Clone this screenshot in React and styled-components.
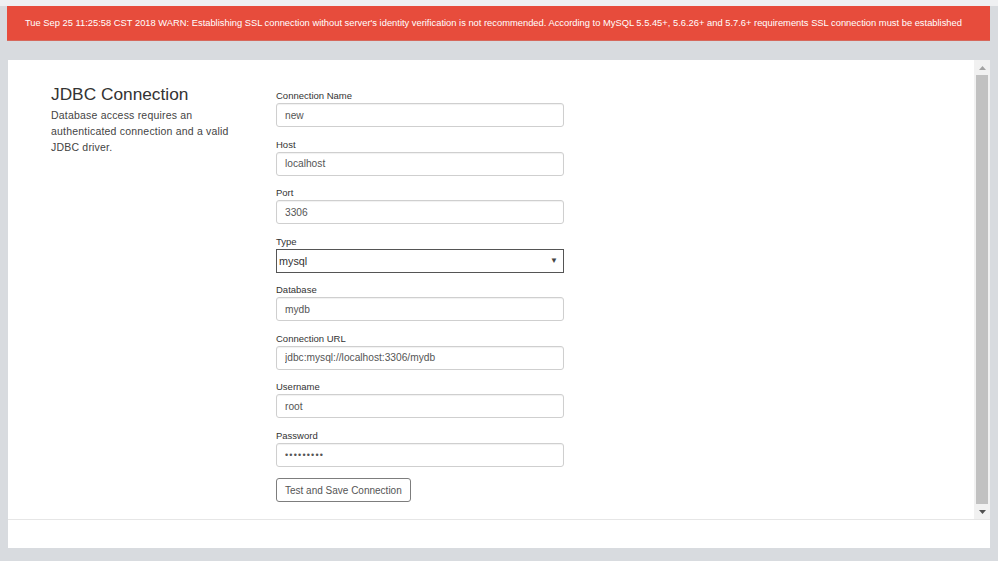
import React from 'react';
import styled, {createGlobalStyle} from 'styled-components';

const GlobalStyle = createGlobalStyle`
  html, body {
    margin: 0;
    padding: 0;
    background: #d8dbdf;
    font-family: "Liberation Sans", Arial, sans-serif;
  }
`;

const Page = styled.div`
  width: 998px;
  height: 561px;
  overflow: hidden;
  display: flex;
  flex-direction: column;
`;

const TopStrip = styled.div`
  height: 6px;
  background: #eff0f2;
`;

const Banner = styled.div`
  margin: 0 8px 0 7px;
  height: 34px;
  line-height: 34px;
  background: #e74c3c;
  color: #fff;
  font-size: 9.35px;
  padding-left: 18px;
  white-space: nowrap;
  overflow: hidden;
  border-bottom: 1px solid #d6685c;
`;

const Panel = styled.div`
  margin: 19px 8px 0 8px;
  height: 488px;
  background: #fff;
  display: flex;
  flex-direction: column;
`;

const ScrollArea = styled.div`
  flex: 0 0 459px;
  display: flex;
  border-bottom: 1px solid #e6e6e6;
`;

const Content = styled.div`
  flex: 1;
  display: flex;
  padding-left: 43px;
`;

const Intro = styled.div`
  width: 225px;
  padding-top: 24px;
`;

const Heading = styled.h1`
  margin: 0 0 3px;
  font-size: 17.3px;
  line-height: 20px;
  font-weight: normal;
  color: #333;
`;

const Description = styled.p`
  margin: 0;
  width: 180px;
  font-size: 10.5px;
  line-height: 16px;
  letter-spacing: 0.2px;
  color: #444;
`;

const Form = styled.form`
  width: 288px;
  padding-top: 30px;
  display: flex;
  flex-direction: column;
`;

const Field = styled.div`
  display: flex;
  flex-direction: column;
  margin-bottom: 11.5px;
`;

const Label = styled.label`
  font-size: 9.5px;
  line-height: 12px;
  margin-bottom: 1px;
  color: #333;
`;

const Input = styled.input`
  box-sizing: border-box;
  height: 24px;
  width: 100%;
  margin: 0;
  padding: 0 8px;
  border: 1px solid #cfcfcf;
  border-radius: 3px;
  box-shadow: inset 0 1px 1px rgba(0, 0, 0, 0.06);
  font-family: "Liberation Sans", Arial, sans-serif;
  font-size: ${props => (props.type === 'password' ? '9px' : '10.2px')};
  letter-spacing: ${props => (props.type === 'password' ? '1.2px' : '0')};
  color: #555;
  outline: none;
`;

const SelectWrap = styled.div`
  position: relative;
  &::after {
    content: '▼';
    position: absolute;
    right: 6px;
    top: 7px;
    font-size: 8px;
    color: #444;
    pointer-events: none;
  }
`;

const Select = styled.select`
  box-sizing: border-box;
  appearance: none;
  height: 24px;
  width: 100%;
  margin: 0;
  padding: 0 2px;
  border: 1px solid #555;
  border-radius: 0;
  background: #fff;
  font-family: "Liberation Sans", Arial, sans-serif;
  font-size: 10.8px;
  color: #333;
  outline: none;
`;

const Button = styled.button`
  align-self: flex-start;
  box-sizing: border-box;
  height: 24px;
  margin-top: 0;
  padding: 0 8px;
  border: 1px solid #7d7d7d;
  border-radius: 3px;
  background: #fff;
  font-family: "Liberation Sans", Arial, sans-serif;
  font-size: 10px;
  color: #555;
`;

const Scrollbar = styled.div`
  width: 16px;
  background: #f1f1f1;
  display: flex;
  flex-direction: column;
  align-items: center;
`;

const ScrollButton = styled.div`
  height: 15px;
  width: 16px;
  display: flex;
  align-items: center;
  justify-content: center;
`;

const Thumb = styled.div`
  flex: 1;
  width: 12px;
  background: #c1c1c1;
`;

const Footer = styled.div`
  flex: 1;
`;

const Arrow = ({down}) => (
  <svg width="7" height="4" viewBox="0 0 7 4">
    <polygon points={down ? '0,0 7,0 3.5,4' : '0,4 7,4 3.5,0'} fill={down ? '#505050' : '#a3a3a3'}/>
  </svg>
);

const fields = [
  {label: 'Connection Name', value: 'new'},
  {label: 'Host', value: 'localhost'},
  {label: 'Port', value: '3306'},
  {label: 'Type', select: true, value: 'mysql'},
  {label: 'Database', value: 'mydb'},
  {label: 'Connection URL', value: 'jdbc:mysql://localhost:3306/mydb'},
  {label: 'Username', value: 'root'},
  {label: 'Password', value: 'secretpwd', type: 'password'},
];

const App = () => {
  return <Page>
    <GlobalStyle/>
    <TopStrip/>
    <Banner>
      Tue Sep 25 11:25:58 CST 2018 WARN: Establishing SSL connection without server's identity verification is not recommended. According to MySQL 5.5.45+, 5.6.26+ and 5.7.6+ requirements SSL connection must be established
    </Banner>
    <Panel>
      <ScrollArea>
        <Content>
          <Intro>
            <Heading>JDBC Connection</Heading>
            <Description>Database access requires an authenticated connection and a valid JDBC driver.</Description>
          </Intro>
          <Form onSubmit={e => e.preventDefault()}>
            {fields.map(field => (
              <Field key={field.label}>
                <Label>{field.label}</Label>
                {field.select
                  ? <SelectWrap>
                    <Select defaultValue={field.value}>
                      <option value="mysql">mysql</option>
                      <option value="postgresql">postgresql</option>
                    </Select>
                  </SelectWrap>
                  : <Input type={field.type ?? 'text'} readOnly value={field.value}/>}
              </Field>
            ))}
            <Button type="button">Test and Save Connection</Button>
          </Form>
        </Content>
        <Scrollbar>
          <ScrollButton><Arrow/></ScrollButton>
          <Thumb/>
          <ScrollButton><Arrow down/></ScrollButton>
        </Scrollbar>
      </ScrollArea>
      <Footer/>
    </Panel>
  </Page>;
};

export default App;
